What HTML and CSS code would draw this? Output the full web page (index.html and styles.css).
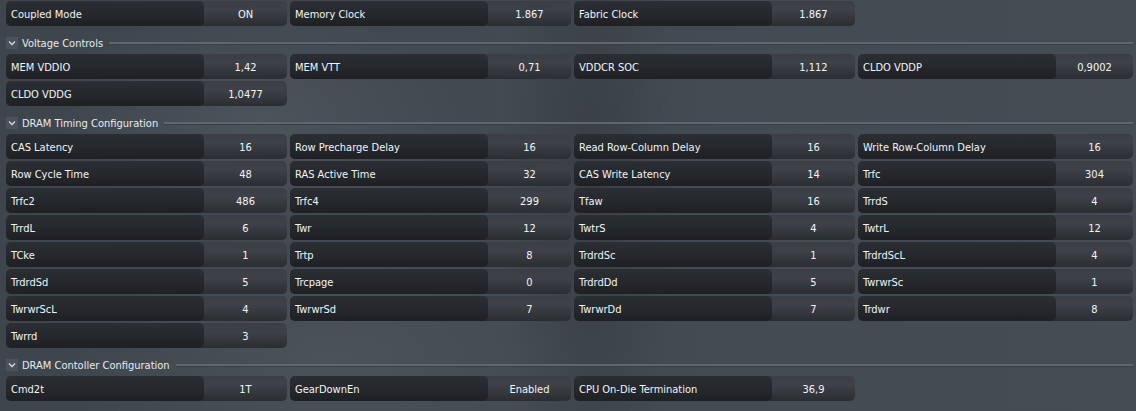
FILE: index.html
```html
<!DOCTYPE html>
<html>
<head>
<meta charset="utf-8">
<link rel="stylesheet" href="styles.css">
</head>
<body>
<div class="page">
  <div class="grid">
    <div class="cell"><span class="lbl">Coupled Mode</span><span class="val">ON</span></div>
    <div class="cell"><span class="lbl">Memory Clock</span><span class="val">1.867</span></div>
    <div class="cell"><span class="lbl">Fabric Clock</span><span class="val">1.867</span></div>
  </div>

  <div class="section">
    <span class="toggle"><svg width="12" height="12" viewBox="0 0 12 12"><path d="M3 4.5 L6 7.5 L9 4.5" fill="none" stroke="#d6dadf" stroke-width="1.3"/></svg></span>
    <span class="stitle">Voltage Controls</span>
    <span class="rule"></span>
  </div>
  <div class="grid">
    <div class="cell"><span class="lbl">MEM VDDIO</span><span class="val">1,42</span></div>
    <div class="cell"><span class="lbl">MEM VTT</span><span class="val">0,71</span></div>
    <div class="cell"><span class="lbl">VDDCR SOC</span><span class="val">1,112</span></div>
    <div class="cell"><span class="lbl">CLDO VDDP</span><span class="val">0,9002</span></div>
    <div class="cell"><span class="lbl">CLDO VDDG</span><span class="val">1,0477</span></div>
  </div>

  <div class="section">
    <span class="toggle"><svg width="12" height="12" viewBox="0 0 12 12"><path d="M3 4.5 L6 7.5 L9 4.5" fill="none" stroke="#d6dadf" stroke-width="1.3"/></svg></span>
    <span class="stitle">DRAM Timing Configuration</span>
    <span class="rule"></span>
  </div>
  <div class="grid">
    <div class="cell"><span class="lbl">CAS Latency</span><span class="val">16</span></div>
    <div class="cell"><span class="lbl">Row Precharge Delay</span><span class="val">16</span></div>
    <div class="cell"><span class="lbl">Read Row-Column Delay</span><span class="val">16</span></div>
    <div class="cell"><span class="lbl">Write Row-Column Delay</span><span class="val">16</span></div>
    <div class="cell"><span class="lbl">Row Cycle Time</span><span class="val">48</span></div>
    <div class="cell"><span class="lbl">RAS Active Time</span><span class="val">32</span></div>
    <div class="cell"><span class="lbl">CAS Write Latency</span><span class="val">14</span></div>
    <div class="cell"><span class="lbl">Trfc</span><span class="val">304</span></div>
    <div class="cell"><span class="lbl">Trfc2</span><span class="val">486</span></div>
    <div class="cell"><span class="lbl">Trfc4</span><span class="val">299</span></div>
    <div class="cell"><span class="lbl">Tfaw</span><span class="val">16</span></div>
    <div class="cell"><span class="lbl">TrrdS</span><span class="val">4</span></div>
    <div class="cell"><span class="lbl">TrrdL</span><span class="val">6</span></div>
    <div class="cell"><span class="lbl">Twr</span><span class="val">12</span></div>
    <div class="cell"><span class="lbl">TwtrS</span><span class="val">4</span></div>
    <div class="cell"><span class="lbl">TwtrL</span><span class="val">12</span></div>
    <div class="cell"><span class="lbl">TCke</span><span class="val">1</span></div>
    <div class="cell"><span class="lbl">Trtp</span><span class="val">8</span></div>
    <div class="cell"><span class="lbl">TrdrdSc</span><span class="val">1</span></div>
    <div class="cell"><span class="lbl">TrdrdScL</span><span class="val">4</span></div>
    <div class="cell"><span class="lbl">TrdrdSd</span><span class="val">5</span></div>
    <div class="cell"><span class="lbl">Trcpage</span><span class="val">0</span></div>
    <div class="cell"><span class="lbl">TrdrdDd</span><span class="val">5</span></div>
    <div class="cell"><span class="lbl">TwrwrSc</span><span class="val">1</span></div>
    <div class="cell"><span class="lbl">TwrwrScL</span><span class="val">4</span></div>
    <div class="cell"><span class="lbl">TwrwrSd</span><span class="val">7</span></div>
    <div class="cell"><span class="lbl">TwrwrDd</span><span class="val">7</span></div>
    <div class="cell"><span class="lbl">Trdwr</span><span class="val">8</span></div>
    <div class="cell"><span class="lbl">Twrrd</span><span class="val">3</span></div>
  </div>

  <div class="section">
    <span class="toggle"><svg width="12" height="12" viewBox="0 0 12 12"><path d="M3 4.5 L6 7.5 L9 4.5" fill="none" stroke="#d6dadf" stroke-width="1.3"/></svg></span>
    <span class="stitle">DRAM Contoller Configuration</span>
    <span class="rule"></span>
  </div>
  <div class="grid">
    <div class="cell"><span class="lbl">Cmd2t</span><span class="val">1T</span></div>
    <div class="cell"><span class="lbl">GearDownEn</span><span class="val">Enabled</span></div>
    <div class="cell"><span class="lbl">CPU On-Die Termination</span><span class="val">36,9</span></div>
  </div>
</div>
</body>
</html>
```

FILE: styles.css
```css
html, body {
  margin: 0;
  padding: 0;
  width: 1136px;
  height: 411px;
  overflow: hidden;
}
body {
  background-color: #444a51;
  background-image:
    radial-gradient(ellipse 200px 120px at 260px 120px, rgba(110,118,126,0.25), rgba(110,118,126,0) 100%),
    radial-gradient(ellipse 260px 140px at 330px 360px, rgba(110,118,126,0.22), rgba(110,118,126,0) 100%),
    radial-gradient(ellipse 90px 380px at 590px 180px, rgba(20,24,28,0.22), rgba(20,24,28,0) 100%),
    linear-gradient(90deg, #3f454c 0%, #444a51 50%, #464c54 100%);
  font-family: "DejaVu Sans Condensed", "DejaVu Sans", sans-serif;
  font-size: 11px;
  color: #f1f5fa;
}
.page {
  padding: 1px 3px 0 6px;
}
.grid {
  display: grid;
  grid-template-columns: 281px 281px 281px 1fr;
  column-gap: 3px;
  row-gap: 2px;
}
.cell {
  display: flex;
  height: 25px;
  border-radius: 5px;
  background: linear-gradient(180deg, #3b3f45 0%, #3e4248 35%, #33363b 70%, #2a2d31 100%);
}
.lbl {
  width: 198px;
  flex: none;
  border-radius: 5px;
  background: linear-gradient(180deg, #2b2e33 0%, #25282c 50%, #1e2024 100%);
  display: flex;
  align-items: center;
  padding: 1px 0 0 5px;
  box-sizing: border-box;
  white-space: nowrap;
}
.val {
  flex: 1;
  display: flex;
  align-items: center;
  justify-content: center;
  padding-top: 1px;
  white-space: nowrap;
}
.section {
  display: flex;
  align-items: center;
  height: 22px;
  margin-top: 6px;
}
.toggle {
  width: 12px;
  height: 12px;
  background: #4d525a;
  display: flex;
  flex: none;
}
.stitle {
  margin-left: 4px;
  padding-top: 1px;
  color: #e6ebf0;
  white-space: nowrap;
}
.rule {
  flex: 1;
  height: 2px;
  margin-left: 6px;
  background: #60666e;
  border-bottom: 1px solid #3b4046;
}
```
